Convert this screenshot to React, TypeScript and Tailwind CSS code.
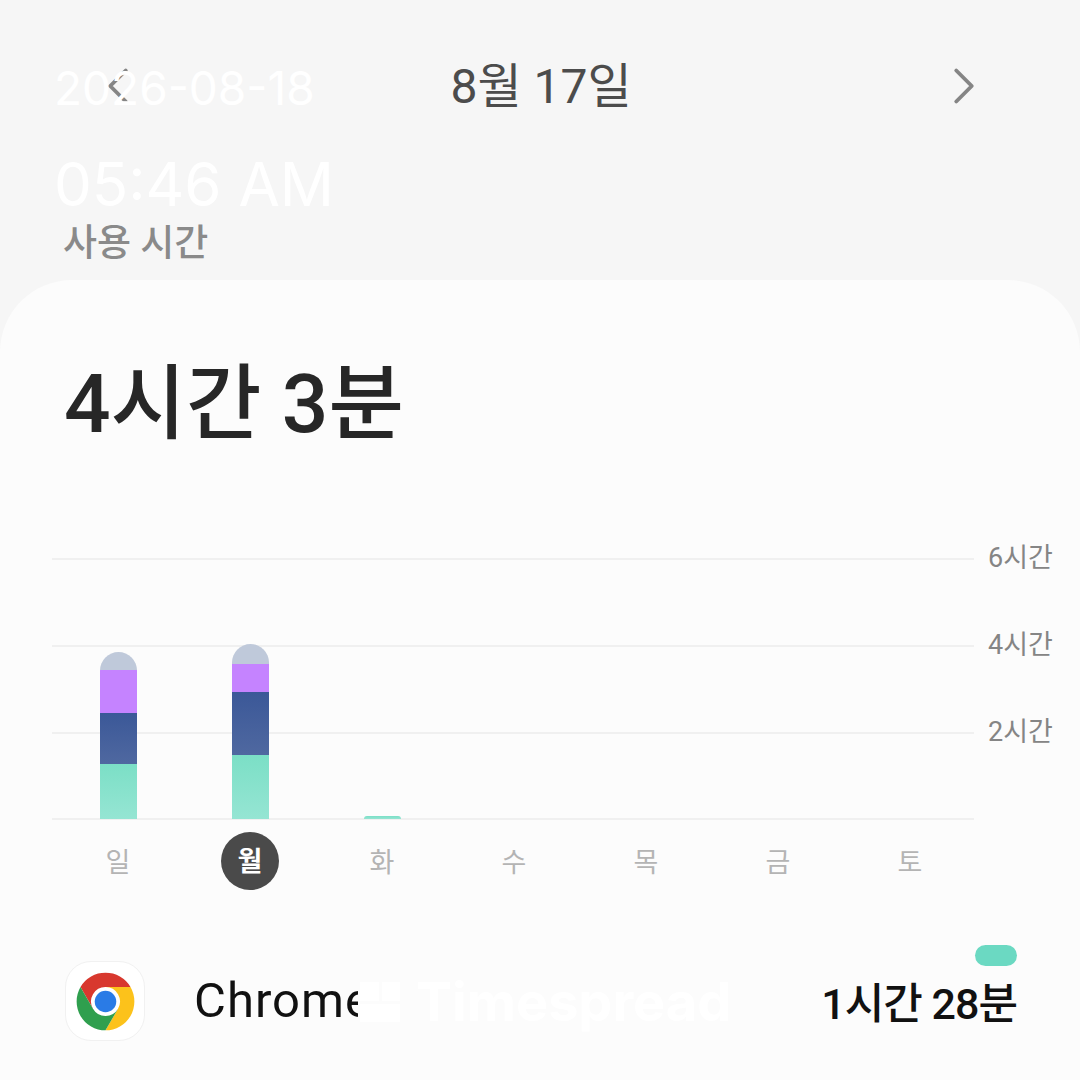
import { ChevronLeft, ChevronRight } from 'lucide-react';

const days = ['일', '월', '화', '수', '목', '금', '토'];

// segment heights in px, top to bottom
const bars = [
  { grey: 18, purple: 43, blue: 51, teal: 55 },
  { grey: 20, purple: 28, blue: 63, teal: 64 },
  { grey: 0, purple: 0, blue: 0, teal: 3 },
  null,
  null,
  null,
  null,
];

const gridRows = ['6시간', '4시간', '2시간', ''];

function ChromeLogo() {
  const seg = 'M43.05 13H24A11 11 0 0 0 14.47 29.5L4.95 13A22 22 0 0 1 43.05 13Z';
  return (
    <svg viewBox="0 0 48 48" className="h-[63px] w-[63px]">
      <circle cx="24" cy="24" r="21.8" fill="#fff" />
      <path d={seg} fill="#d8382e" />
      <path d={seg} fill="#fcc21b" transform="rotate(120 24 24)" />
      <path d={seg} fill="#2f9f4e" transform="rotate(240 24 24)" />
      <circle cx="24" cy="24" r="10.4" fill="#fff" />
      <circle cx="24" cy="24" r="8.2" fill="#2a7be6" />
    </svg>
  );
}

export default function App() {
  return (
    <div className="relative h-[1080px] w-[1080px] overflow-hidden bg-[#f6f6f6] font-['Roboto','Noto_Sans_CJK_KR',sans-serif]">
      {/* Header */}
      <div className="h-[174px] pl-[87px] pr-[85px] pt-[55px]">
        <div className="flex h-[62px] items-center justify-between">
          <ChevronLeft className="h-[62px] w-[62px] text-[#858585]" strokeWidth={1.5} />
          <p className="pt-[2px] text-[48px] leading-[50px] text-[#4c4c4c]">8월 17일</p>
          <ChevronRight className="h-[62px] w-[62px] text-[#858585]" strokeWidth={1.5} />
        </div>
      </div>

      <div className="flex h-[106px] items-start pl-[63px] pt-[48px]">
        <p className="text-[37px] font-medium leading-[44px] text-[#8a8a8a]">사용 시간</p>
      </div>

      {/* Card */}
      <div className="h-[800px] rounded-t-[72px] bg-[#fcfcfc]">
        <div className="pl-[64px] pt-[79px]">
          <h1 className="text-[82px] font-medium leading-[90px] text-[#272727]">4시간 3분</h1>
        </div>

        {/* Chart */}
        <div className="relative mt-[95px] pl-[52px]">
          <div className="flex flex-col gap-[58px]">
            {gridRows.map((label, i) => (
              <div key={i} className={`flex h-[29px] items-center ${i === 3 ? '-mt-px' : ''}`}>
                <div className="h-[2px] w-[922px] bg-[#f0f0f0]" />
                {label && (
                  <span className="ml-[14px] whitespace-nowrap text-[27px] leading-[29px] text-[#858585]">
                    {label}
                  </span>
                )}
              </div>
            ))}
          </div>
          <div className="absolute bottom-[14px] left-[52px] grid w-[924px] grid-cols-7 items-end">
            {bars.map((b, i) => (
              <div key={i} className="flex justify-center">
                {b && (
                  <div className="flex w-[37px] flex-col overflow-hidden rounded-t-full">
                    {b.grey > 0 && <div className="bg-[#bfc9da]" style={{ height: b.grey }} />}
                    {b.purple > 0 && <div className="bg-[#c583ff]" style={{ height: b.purple }} />}
                    {b.blue > 0 && (
                      <div className="bg-gradient-to-b from-[#3b5898] to-[#4f68a0]" style={{ height: b.blue }} />
                    )}
                    <div className="bg-gradient-to-b from-[#7bdfc6] to-[#95e5d3]" style={{ height: b.teal }} />
                  </div>
                )}
              </div>
            ))}
          </div>
        </div>

        {/* Day labels */}
        <div className="ml-[52px] -mt-px grid w-[924px] grid-cols-7">
          {days.map((d, i) => (
            <div key={d} className="flex justify-center">
              {i === 1 ? (
                <span className="flex h-[58px] w-[58px] items-center justify-center rounded-full bg-[#4a4a4a] pt-[2px] text-[27px] font-bold text-white">
                  {d}
                </span>
              ) : (
                <span className="flex h-[58px] items-center pt-[4px] text-[27px] text-[#b4b4b4]">{d}</span>
              )}
            </div>
          ))}
        </div>

        {/* App row */}
        <div className="mt-[42px] flex items-start pl-[65px] pr-[63px] pt-[29px]">
          <div className="flex h-[80px] w-[80px] items-center justify-center rounded-[26px] border border-[#f1f1f1] bg-white">
            <ChromeLogo />
          </div>
          <p className="ml-[49px] pt-[10px] text-[49px] leading-[60px] tracking-[1px] text-[#111111]">Chrome</p>
          <div className="relative ml-auto pt-[18px]">
            <div className="absolute -top-[16px] right-0 h-[21px] w-[42px] rounded-full bg-[#6bd9c2]" />
            <p className="text-[43px] font-medium leading-[50px] tracking-[-1px] text-[#111111]">1시간 28분</p>
          </div>
        </div>
      </div>

      {/* Watermark stamp */}
      <p className="absolute left-[54px] top-[60px] font-['Inter',sans-serif] text-[46px] leading-[56px] text-white">
        2026-08-18
      </p>
      <p className="absolute left-[54px] top-[147px] font-['Inter',sans-serif] text-[60px] leading-[74px] text-white">
        05:46 AM
      </p>
      <div className="absolute left-[358px] top-[980px] flex items-center gap-[16px] bg-[#fcfcfc] pl-[2px] text-white">
        <div className="grid h-[40px] w-[40px] grid-cols-2 gap-[3px]">
          <div className="bg-white" />
          <div className="bg-white" />
          <div className="col-span-2 bg-white" />
        </div>
        <span className="font-['Inter',sans-serif] text-[54px] font-bold leading-[44px]">Timespread</span>
      </div>
    </div>
  );
}
